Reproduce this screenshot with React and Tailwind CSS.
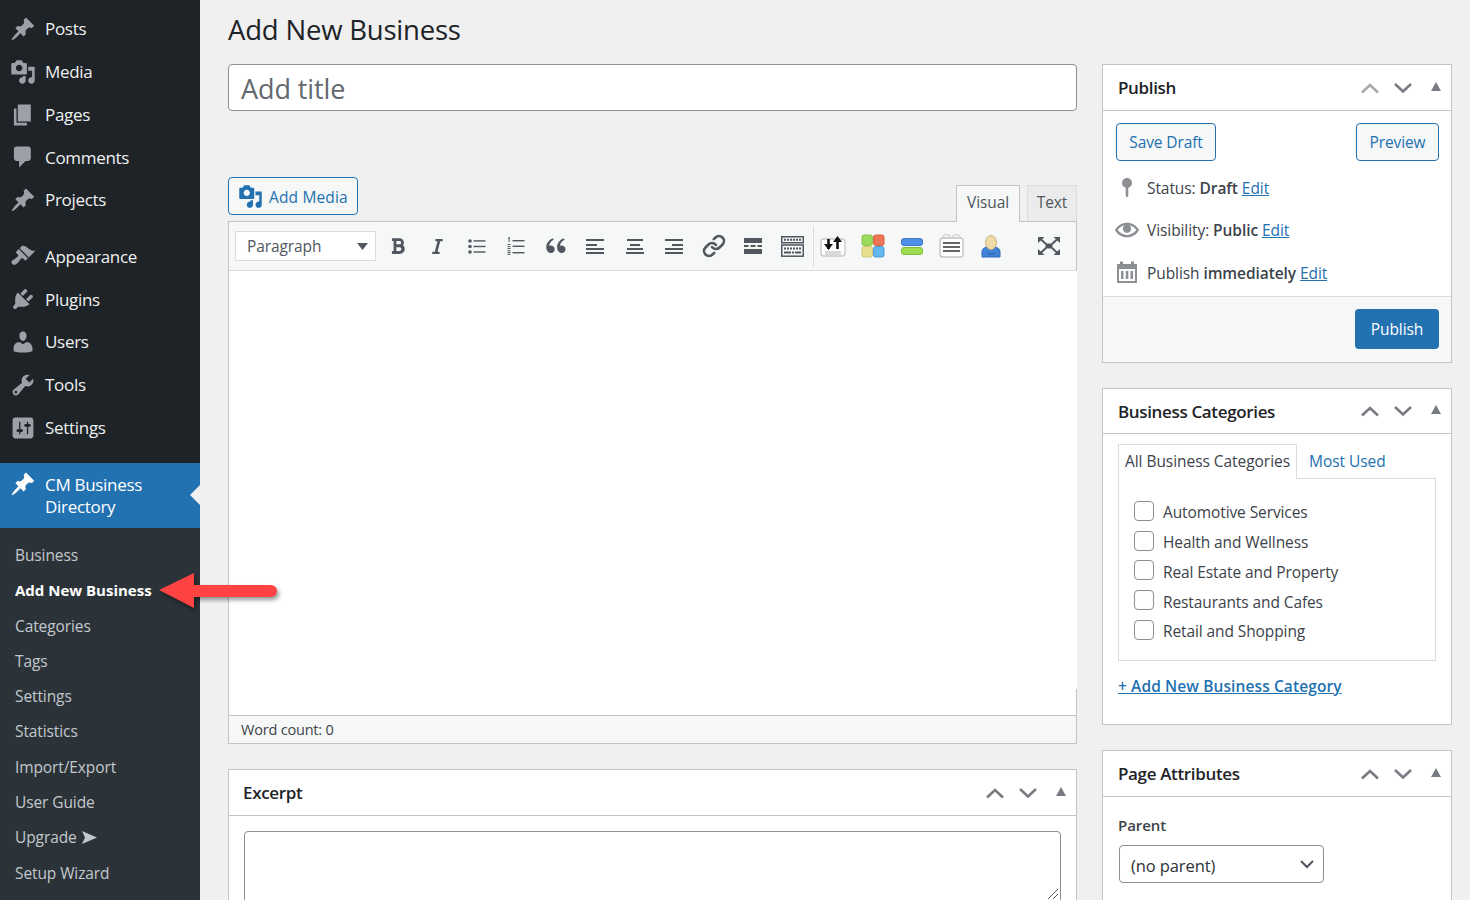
import React from "react";
import { FaBold, FaItalic } from "react-icons/fa";
import { RiDoubleQuotesL } from "react-icons/ri";
import { Link as LinkIcon } from "lucide-react";

const D = ({ d, className = "", size = 26 }) => (
  <svg viewBox="0 0 20 20" width={size} height={size} className={className} fill="currentColor"><path d={d} /></svg>
);
const P = {
  post: "M10.44 3.02l1.82-1.82 6.36 6.35-1.83 1.82c-1.05-.68-2.48-.57-3.41.36l-.75.75c-.92.93-1.04 2.35-.35 3.41l-1.83 1.82-2.41-2.41-2.8 2.79c-.42.42-3.38 2.71-3.8 2.29s1.86-3.39 2.28-3.81l2.79-2.79L4.1 9.36l1.83-1.82c1.05.69 2.48.57 3.4-.36l.75-.75c.93-.92 1.05-2.35.36-3.41z",
  media: "M13 11V4c0-.55-.45-1-1-1h-1.67L9 1H5L3.67 3H2c-.55 0-1 .45-1 1v7c0 .55.45 1 1 1h10c.55 0 1-.45 1-1zM7 4.5c1.38 0 2.5 1.12 2.5 2.5S8.38 9.5 7 9.5 4.5 8.38 4.5 7 5.62 4.5 7 4.5zM14 6h5v10.5c0 1.38-1.12 2.5-2.5 2.5S14 17.88 14 16.5s1.12-2.5 2.5-2.5c.17 0 .34.02.5.05V9h-3V6zm-4 8.05V13h2v3.5c0 1.38-1.12 2.5-2.5 2.5S7 17.88 7 16.5 8.12 14 9.5 14c.17 0 .34.02.5.05z",
  page: "M6 15V2h10v13H6zm-1 1h8v2H3V5h2v11z",
  comments: "M5 2h9c1.1 0 2 .9 2 2v7c0 1.1-.9 2-2 2h-2l-5 5v-5H5c-1.1 0-2-.9-2-2V4c0-1.1.9-2 2-2z",
  appearance: "M14.48 11.06L7.41 3.99l1.5-1.5c.5-.56 2.3-.47 3.51.32 1.21.8 1.43 1.28 2.91 2.1 1.18.64 2.45 1.26 4.45.85zm-.71.71L6.7 4.7 4.93 6.47c-.39.39-.39 1.02 0 1.41l1.06 1.06c.39.39.39 1.03 0 1.42-.6.6-1.43 1.11-2.21 1.69-.35.26-.7.53-1.01.84C1.43 13.23.4 14.75 1.8 16.15c1.41 1.41 2.92.38 4.28-.98.31-.31.58-.66.84-1.01.58-.78 1.09-1.61 1.69-2.21.39-.39 1.03-.39 1.42 0l1.06 1.06c.39.39 1.02.39 1.41 0z",
  plugins: "M13.11 4.36L9.87 7.6 8 5.73l3.24-3.24c.35-.34 1.05-.2 1.56.32.52.51.66 1.21.31 1.55zm-8 1.77l.91-1.12 9.01 9.01-1.19.84c-.71.71-2.63 1.16-3.82 1.16H6.14L4.9 17.26c-.59.59-1.54.59-2.12 0-.59-.58-.59-1.53 0-2.12l1.24-1.24v-3.88c0-1.13.4-3.19 1.09-3.89zm7.26 3.97l3.24-3.24c.34-.35 1.04-.21 1.55.31.52.51.66 1.21.31 1.55l-3.24 3.25z",
  users: "M10 9.25c-2.27 0-2.73-3.44-2.73-3.44C7 4.02 7.82 2 9.97 2c2.16 0 2.98 2.02 2.71 3.81 0 0-.41 3.44-2.68 3.44zm0 2.57L12.72 10c2.39 0 4.52 2.33 4.52 4.53v2.49s-3.65 1.13-7.24 1.13c-3.65 0-7.24-1.13-7.24-1.13v-2.49c0-2.25 1.94-4.48 4.47-4.48z",
  tools: "M16.68 9.77c-1.34 1.34-3.3 1.67-4.95.99l-5.41 6.52c-.99.99-2.59.99-3.58 0s-.99-2.59 0-3.57l6.52-5.42c-.68-1.65-.35-3.61.99-4.95 1.28-1.28 3.12-1.62 4.72-1.06l-2.89 2.89 2.82 2.82 2.86-2.87c.53 1.58.18 3.39-1.08 4.65zM3.81 16.21c.4.39 1.04.39 1.43 0 .4-.4.4-1.04 0-1.43-.39-.4-1.03-.4-1.43 0-.39.39-.39 1.03 0 1.43z",
  settings: "M18 16V4c0-1.1-.9-2-2-2H4c-1.1 0-2 .9-2 2v12c0 1.1.9 2 2 2h12c1.1 0 2-.9 2-2zM8 11h1c.55 0 1 .45 1 1s-.45 1-1 1H8v1.5c0 .28-.22.5-.5.5s-.5-.22-.5-.5V13H6c-.55 0-1-.45-1-1s.45-1 1-1h1V5.5c0-.28.22-.5.5-.5s.5.22.5.5V11zm5-2h-1c-.55 0-1-.45-1-1s.45-1 1-1h1V5.5c0-.28.22-.5.5-.5s.5.22.5.5V7h1c.55 0 1 .45 1 1s-.45 1-1 1h-1v5.5c0 .28-.22.5-.5.5s-.5-.22-.5-.5V9z",
  eye: "M19.7 9.4C17.7 6 14 3.9 10 3.9S2.3 6 .3 9.4L0 10l.3.6c2 3.4 5.7 5.5 9.7 5.5s7.7-2.1 9.7-5.5l.3-.6-.3-.6zM10 14.1c-3.1 0-6-1.6-7.7-4.1C3.6 8 5.7 6.6 8 6.1c-.9.6-1.5 1.7-1.5 2.9 0 1.9 1.6 3.5 3.5 3.5s3.5-1.6 3.5-3.5c0-1.2-.6-2.3-1.5-2.9 2.3.5 4.4 1.9 5.7 3.9-1.7 2.5-4.6 4.1-7.7 4.1z",
};

const MenuItem = ({ icon, label }) => (
  <div className="h-[42.8px] flex items-center pl-[9.5px] text-[#f0f0f1] text-[17px] tracking-[-0.3px]">
    <D d={P[icon]} className="text-[#9ca1a7] shrink-0" />
    <span className="ml-[9.5px]">{label}</span>
  </div>
);
const SubItem = ({ children, bold }) => (
  <div className={`h-[35.3px] flex items-center pl-[15px] ${bold ? "text-white font-bold text-[15px] pb-[1px]" : "text-[#c3c8cd] text-[15.5px] tracking-[-0.1px]"}`}>{children}</div>
);

const Handles = ({ dim }) => (
  <div className="ml-auto flex items-center pr-[10px]">
    <svg width="20" height="12" viewBox="0 0 20 12" fill="none" strokeWidth="2.6" className={dim ? "stroke-[#a7aaad]" : "stroke-[#787c82]"}><path d="M2 10.5 L10 3 L18 10.5" /></svg>
    <svg width="20" height="12" viewBox="0 0 20 12" fill="none" strokeWidth="2.6" className="stroke-[#787c82] ml-[13px]"><path d="M2 2 L10 9.5 L18 2" /></svg>
    <svg width="10" height="9" viewBox="0 0 10 9" className="fill-[#787c82] ml-[18px] mb-[3px]"><path d="M5 0 L10 9 L0 9 Z" /></svg>
  </div>
);
const BoxHeader = ({ title, dim, h = "h-[46px]", px = "pl-[15px]" }) => (
  <div className={`${h} ${px} flex items-center border-b border-[#c3c4c7] text-[#1d2327] font-semibold text-[17px] tracking-[-0.35px]`}>
    <span className="pt-[1px]">{title}</span>
    <Handles dim={dim} />
  </div>
);
const OutlineBtn = ({ children, className = "" }) => (
  <div className={`h-[38px] pt-[1px] flex items-center justify-center border border-[#2271b1] rounded-[4px] bg-[#f6f7f7] text-[#2271b1] text-[15.5px] tracking-[-0.1px] ${className}`}>{children}</div>
);

const Tb = ({ children }) => <div className="w-[39.5px] h-full flex items-center justify-center text-[#50575e] shrink-0">{children}</div>;
const Lines = ({ rows }) => (
  <svg width="18" height="16" viewBox="0 0 18 16" className="fill-[#50575e]">
    {rows.map(([x, y, w, h], i) => <rect key={i} x={x} y={y} width={w} height={h} />)}
  </svg>
);

const Arrow = () => (
  <svg width="130" height="50" viewBox="0 0 130 50" className="absolute left-[155px] top-[568px] drop-shadow-[2px_3px_2px_rgba(0,0,0,0.4)]">
    <path d="M4 22 L39 5 V17 H116 a6 6 0 0 1 0 12 H39 V40 Z" fill="#ff4343" />
  </svg>
);

const Cat = ({ children }) => (
  <div className="h-[29.75px] flex items-center">
    <div className="w-[20px] h-[20px] mb-[4px] rounded-[4px] border border-[#8c8f94] bg-white shrink-0" />
    <span className="ml-[9px] text-[15.5px] tracking-[-0.1px] text-[#3c434a]">{children}</span>
  </div>
);

const Row = ({ icon, children, className = "" }) => (
  <div className={`flex items-center text-[15.5px] tracking-[-0.08px] text-[#3c434a] ${className}`}>
    <div className="w-[32px] ml-[-1px] flex justify-center shrink-0 pr-[8px] text-[#8c8f94]">{icon}</div>
    <div className="pt-[2px]">{children}</div>
  </div>
);
const Ed = () => <a className="text-[#2271b1] underline">Edit</a>;

export default function App() {
  return (
    <div className="relative w-[1470px] h-[900px] overflow-hidden bg-[#f0f0f1] flex font-['Open_Sans',sans-serif]">
      {/* Sidebar */}
      <aside className="w-[200px] shrink-0 bg-[#1d2327] pt-[7.6px] flex flex-col">
        <MenuItem icon="post" label="Posts" />
        <MenuItem icon="media" label="Media" />
        <MenuItem icon="page" label="Pages" />
        <MenuItem icon="comments" label="Comments" />
        <MenuItem icon="post" label="Projects" />
        <div className="h-[13.5px]" />
        <MenuItem icon="appearance" label="Appearance" />
        <MenuItem icon="plugins" label="Plugins" />
        <MenuItem icon="users" label="Users" />
        <MenuItem icon="tools" label="Tools" />
        <MenuItem icon="settings" label="Settings" />
        <div className="mt-[13.5px] relative h-[65px] bg-[#2271b1] flex pl-[9.5px] pt-[11px] text-white text-[17px] leading-[22px] tracking-[-0.3px]">
          <D d={P.post} className="text-white shrink-0 -mt-[3px]" />
          <span className="ml-[9.5px]">CM Business<br />Directory</span>
          <div className="absolute right-0 top-[22px] w-0 h-0 border-y-[10px] border-y-transparent border-r-[10px] border-r-[#f0f0f1]" />
        </div>
        <div className="flex-1 bg-[#2c3338] pt-[10.4px]">
          <SubItem>Business</SubItem>
          <SubItem bold>Add New Business</SubItem>
          <SubItem>Categories</SubItem>
          <SubItem>Tags</SubItem>
          <SubItem>Settings</SubItem>
          <SubItem>Statistics</SubItem>
          <SubItem>Import/Export</SubItem>
          <SubItem>User Guide</SubItem>
          <SubItem>
            Upgrade
            <svg width="15" height="13" viewBox="0 0 15 13" className="ml-[5px] fill-[#c3c8cd]"><path d="M0 0 L15 6.5 L0 13 L3 6.5 Z" /></svg>
          </SubItem>
          <SubItem>Setup Wizard</SubItem>
        </div>
      </aside>

      {/* Main */}
      <main className="flex-1 pl-[28px] flex gap-[25px] items-start">
        <div className="w-[849px] shrink-0">
          <h1 className="h-[64px] flex items-center pb-[4px] text-[27.5px] tracking-[-0.2px] text-[#1d2327]">Add New Business</h1>
          <div className="h-[47px] border border-[#8c8f94] rounded-[4px] bg-white flex items-center pl-[12px] pt-[3px] text-[27px] tracking-[-0.1px] text-[#646970]">Add title</div>
          <div className="mt-[66px] h-[44px] flex justify-between">
            <div className="w-[130px] h-[38px] pt-[4px] flex items-center border border-[#2271b1] rounded-[4px] bg-[#f6f7f7] text-[#2271b1] pl-[9px] text-[15.5px] tracking-[0.15px]">
              <D d={P.media} size={25} className="-mt-[4px]" />
              <span className="ml-[6px]">Add Media</span>
            </div>
            <div className="self-end flex gap-[7px] items-end relative z-10">
              <div className="w-[64px] h-[37px] -mb-px pb-[2px] flex items-center justify-center border border-[#c3c4c7] border-b-0 bg-[#f6f7f7] text-[#50575e] text-[15.5px] tracking-[-0.1px]">Visual</div>
              <div className="w-[50px] h-[36px] pb-[2px] flex items-center justify-center border border-[#dcdcde] border-b-0 bg-[#ebebec] text-[#50575e] text-[15.5px] tracking-[-0.1px]">Text</div>
            </div>
          </div>
          <div className="border border-[#c3c4c7]">
            <div className="h-[49px] bg-[#f6f7f7] border-b border-[#dcdcde] flex items-center pl-[6px]">
              <div className="w-[141px] h-[30px] pt-[1px] bg-white border border-[#dcdcde] flex items-center pl-[11px] pr-[7px] text-[15.5px] tracking-[-0.1px] text-[#50575e] shrink-0">
                <span>Paragraph</span>
                <svg width="11" height="7" viewBox="0 0 11 7" className="ml-auto fill-[#50575e]"><path d="M0 0 H11 L5.5 7 Z" /></svg>
              </div>
              <div className="ml-[2px] flex h-full items-center">
                <Tb><FaBold size={18} /></Tb>
                <Tb><FaItalic size={17} /></Tb>
                <Tb>
                  <svg width="18" height="15" viewBox="0 0 18 15" className="fill-[#50575e]">
                    <circle cx="2" cy="2" r="1.8" /><circle cx="2" cy="7.5" r="1.8" /><circle cx="2" cy="13" r="1.8" />
                    <rect x="5.5" y="1.2" width="12" height="1.4" /><rect x="5.5" y="6.8" width="12" height="1.4" /><rect x="5.5" y="12.3" width="12" height="1.4" />
                  </svg>
                </Tb>
                <Tb>
                  <svg width="18" height="18" viewBox="0 0 18 18" className="fill-[#50575e]">
                    <rect x="1" y="0.5" width="2" height="1" /><rect x="1.6" y="0.5" width="1" height="4.5" />
                    <rect x="0.5" y="7" width="3" height="1" /><rect x="0.5" y="9.2" width="3" height="1" /><rect x="0.5" y="11" width="3" height="1" />
                    <rect x="0.5" y="13.2" width="3" height="1" /><rect x="0.5" y="15" width="3" height="1" /><rect x="0.5" y="16.8" width="3" height="1" />
                    <rect x="5.5" y="3" width="12" height="1.4" /><rect x="5.5" y="8.6" width="12" height="1.4" /><rect x="5.5" y="15" width="12" height="1.4" />
                  </svg>
                </Tb>
                <Tb><RiDoubleQuotesL size={26} /></Tb>
                <Tb><Lines rows={[[0, 1, 18, 2], [0, 6, 11, 2], [0, 10, 18, 2], [0, 14, 18, 2]]} /></Tb>
                <Tb><Lines rows={[[1, 1, 16, 2], [4, 6, 10, 2], [1, 10, 16, 2], [0, 14, 18, 2]]} /></Tb>
                <Tb><Lines rows={[[0, 1, 18, 2], [7, 6, 11, 2], [0, 10, 18, 2], [0, 14, 18, 2]]} /></Tb>
                <Tb><LinkIcon size={24} strokeWidth={2.6} /></Tb>
                <Tb>
                  <svg width="18" height="18" viewBox="0 0 18 18" className="fill-[#50575e]">
                    <rect x="0" y="1" width="18" height="5" />
                    <rect x="0" y="8" width="4.5" height="2" /><rect x="6.5" y="8" width="5" height="2" /><rect x="13.5" y="8" width="4.5" height="2" />
                    <rect x="0" y="12" width="18" height="5" />
                  </svg>
                </Tb>
                <Tb>
                  <svg width="23" height="21" viewBox="0 0 23 21" fill="none" className="stroke-[#50575e]">
                    <rect x="0.75" y="0.75" width="21.5" height="6" strokeWidth="1.5" />
                    <rect x="0.75" y="9" width="21.5" height="11.2" strokeWidth="1.5" />
                    <path d="M3 3.7 H20" strokeWidth="2" strokeDasharray="2 1" />
                    <path d="M3 12.5 H20" strokeWidth="2" strokeDasharray="2 1" />
                    <path d="M3 16.5 H20" strokeWidth="2" strokeDasharray="7 1 2 1" />
                  </svg>
                </Tb>
              </div>
              <div className="w-px h-[41px] bg-[#dcdcde] shrink-0" />
              <div className="flex h-full items-center">
                <Tb>
                  <svg width="26" height="24" viewBox="0 0 26 24">
                    <rect x="1" y="5" width="24" height="17" rx="3" fill="#fff" stroke="#c9c9c9" strokeWidth="1.4" />
                    <path d="M5 18 H21 M5 20 H21" stroke="#b4b4b4" strokeWidth="1" />
                    <path d="M8.5 15 V5" stroke="#111" strokeWidth="2.6" />
                    <path d="M4 10 H13 L8.5 16 Z" fill="#111" />
                    <path d="M17.5 15 V6" stroke="#111" strokeWidth="2.6" />
                    <path d="M13 8 H22 L17.5 2 Z" fill="#111" />
                  </svg>
                </Tb>
                <Tb>
                  <svg width="24" height="24" viewBox="0 0 24 24">
                    <rect x="1" y="1" width="10.4" height="10.4" rx="2" fill="#9cdc5c" stroke="#86c34b" />
                    <rect x="12.6" y="1" width="10.4" height="10.4" rx="2" fill="#ee7455" stroke="#d8603f" />
                    <rect x="1" y="12.6" width="10.4" height="10.4" rx="2" fill="#e6e08f" stroke="#cdc777" />
                    <rect x="12.6" y="12.6" width="10.4" height="10.4" rx="2" fill="#63b6ee" stroke="#4b9bd4" />
                  </svg>
                </Tb>
                <Tb>
                  <svg width="22" height="17" viewBox="0 0 22 17">
                    <rect x="0.5" y="0.5" width="21" height="7" rx="2.5" fill="#4f8fe6" stroke="#3d77c8" />
                    <rect x="0.5" y="9.5" width="21" height="7" rx="2.5" fill="#9ddc4f" stroke="#7fbd38" />
                  </svg>
                </Tb>
                <Tb>
                  <svg width="25" height="24" viewBox="0 0 25 24">
                    <rect x="4" y="0.7" width="7" height="6" rx="2" fill="#f2f2f2" stroke="#c9c9c9" />
                    <rect x="14" y="0.7" width="7" height="6" rx="2" fill="#f2f2f2" stroke="#c9c9c9" />
                    <rect x="1" y="4" width="23" height="19" rx="3" fill="#fff" stroke="#c4c4c4" strokeWidth="1.4" />
                    <path d="M4 9 H21 M4 13 H21 M4 17 H21" stroke="#333" strokeWidth="1.5" />
                  </svg>
                </Tb>
                <Tb>
                  <svg width="20" height="23" viewBox="0 0 20 23">
                    <path d="M1 22 V17 Q1 13 6 12 H14 Q19 13 19 17 V22 Z" fill="#3f82d6" stroke="#2e69b8" />
                    <ellipse cx="10" cy="7.5" rx="5.5" ry="7" fill="#efd9a6" stroke="#c9b182" />
                    <rect x="6" y="18" width="8" height="1.5" fill="#2e69b8" />
                  </svg>
                </Tb>
              </div>
              <div className="ml-[18.5px]">
                <Tb>
                  <svg width="22" height="18" viewBox="0 0 22 18" fill="none" className="stroke-[#50575e]">
                    <rect x="7.5" y="6.5" width="7" height="5" className="fill-[#50575e]" strokeWidth="0" />
                    <path d="M3 2.5 L8 7 M19 2.5 L14 7 M3 15.5 L8 11 M19 15.5 L14 11" strokeWidth="2" />
                    <path d="M0 0 H6.5 L0 6 Z M22 0 H15.5 L22 6 Z M0 18 H6.5 L0 12 Z M22 18 H15.5 L22 12 Z" className="fill-[#50575e]" strokeWidth="0" />
                  </svg>
                </Tb>
              </div>
            </div>
            <div className="h-[444px] bg-white">
              <div className="h-[418px] -mr-px bg-white relative" />
            </div>
            <div className="h-[28px] bg-[#f6f7f7] border-t border-[#c3c4c7] flex items-center pl-[12px] text-[14.5px] tracking-[-0.2px] text-[#3c434a]">Word count: 0</div>
          </div>

          <div className="mt-[25px] border border-[#c3c4c7] bg-white h-[200px]">
            <BoxHeader title="Excerpt" px="pl-[14px]" />
            <div className="relative mt-[15px] ml-[15px] w-[817px] h-[100px] border border-[#8c8f94] rounded-[4px] bg-white overflow-hidden">
              <svg width="14" height="14" viewBox="0 0 14 14" className="absolute right-[1px] top-[54px] stroke-[#555]"><path d="M3 13 L13 3 M8 13 L13 8" strokeWidth="1" /></svg>
            </div>
          </div>
        </div>

        <div className="w-[350px] shrink-0 pt-[64px] flex flex-col">
          {/* Publish */}
          <section className="border border-[#c3c4c7] bg-white h-[299px] flex flex-col">
            <BoxHeader title="Publish" dim />
            <div className="flex-1 pl-[13px] pr-[12px] pt-[12px] flex flex-col">
              <div className="flex justify-between">
                <OutlineBtn className="w-[100px]">Save Draft</OutlineBtn>
                <OutlineBtn className="w-[83px]">Preview</OutlineBtn>
              </div>
              <Row className="mt-[16px] h-[22px]" icon={
                <svg width="12" height="20" viewBox="0 0 12 20" className="fill-[#8c8f94]"><circle cx="6" cy="5" r="5" /><rect x="4.7" y="8" width="2.6" height="11" rx="1.2" /></svg>
              }><span>Status: <b className="font-semibold">Draft</b> <Ed /></span></Row>
              <Row className="mt-[20px] h-[22px]" icon={<D d={P.eye} size={24} />}>
                <span>Visibility: <b className="font-semibold">Public</b> <Ed /></span>
              </Row>
              <Row className="mt-[21px] h-[22px]" icon={
                <svg width="22" height="22" viewBox="0 0 22 22" className="fill-[#8c8f94] -mt-[2px]"><path d="M1 3 H4 V0.5 H7 V3 H15 V0.5 H18 V3 H21 V22 H1 Z M3 8 V20 H19 V8 Z" /><rect x="5" y="10" width="2.5" height="8" /><rect x="9.8" y="10" width="2.5" height="8" /><rect x="14.5" y="10" width="2.5" height="8" /></svg>
              }><span>Publish <b className="font-semibold">immediately</b> <Ed /></span></Row>
            </div>
            <div className="h-[66px] pb-[2px] bg-[#f6f7f7] border-t border-[#dcdcde] flex items-center justify-end pr-[12px]">
              <div className="w-[84px] h-[40px] pt-[2px] rounded-[4px] bg-[#2271b1] text-white flex items-center justify-center text-[15.5px] tracking-[-0.1px]">Publish</div>
            </div>
          </section>

          {/* Categories */}
          <section className="mt-[25px] border border-[#c3c4c7] bg-white h-[337px] flex flex-col">
            <BoxHeader title="Business Categories" h="h-[45px]" />
            <div className="px-[15px] pt-[10px]">
              <div className="flex h-[35px] items-stretch relative z-10">
                <div className="w-[179px] border border-[#dcdcde] border-b-0 bg-white flex items-center justify-center text-[15.5px] tracking-[-0.05px] text-[#3c434a]">All Business Categories</div>
                <div className="ml-[12px] flex items-center text-[15.5px] tracking-[-0.05px] text-[#2271b1]">Most Used</div>
              </div>
              <div className="w-[318px] h-[183px] -mt-px border border-[#dcdcde] pl-[15px] pt-[19px]">
                <Cat>Automotive Services</Cat>
                <Cat>Health and Wellness</Cat>
                <Cat>Real Estate and Property</Cat>
                <Cat>Restaurants and Cafes</Cat>
                <Cat>Retail and Shopping</Cat>
              </div>
              <div className="mt-[14px] text-[15.5px] tracking-[0.1px] font-semibold text-[#2271b1] underline">+ Add New Business Category</div>
            </div>
          </section>

          {/* Page attributes */}
          <section className="mt-[25px] border border-[#c3c4c7] bg-white h-[200px] flex flex-col">
            <BoxHeader title="Page Attributes" />
            <div className="px-[16px] pt-[17px]">
              <div className="h-[22px] -ml-px flex items-center font-semibold text-[15px] tracking-[-0.05px] text-[#3c434a]">Parent</div>
              <div className="mt-[9px] w-[205px] h-[38px] pt-[4px] border border-[#8c8f94] rounded-[4px] bg-white flex items-center pl-[11px] pr-[9px] text-[16.5px] tracking-[-0.1px] text-[#2c3338]">
                <span>(no parent)</span>
                <svg width="14" height="9" viewBox="0 0 14 9" fill="none" className="ml-auto -mt-[4px] stroke-[#50575e]"><path d="M1 1 L7 7 L13 1" strokeWidth="2" /></svg>
              </div>
            </div>
          </section>
        </div>
      </main>

      <Arrow />
    </div>
  );
}
